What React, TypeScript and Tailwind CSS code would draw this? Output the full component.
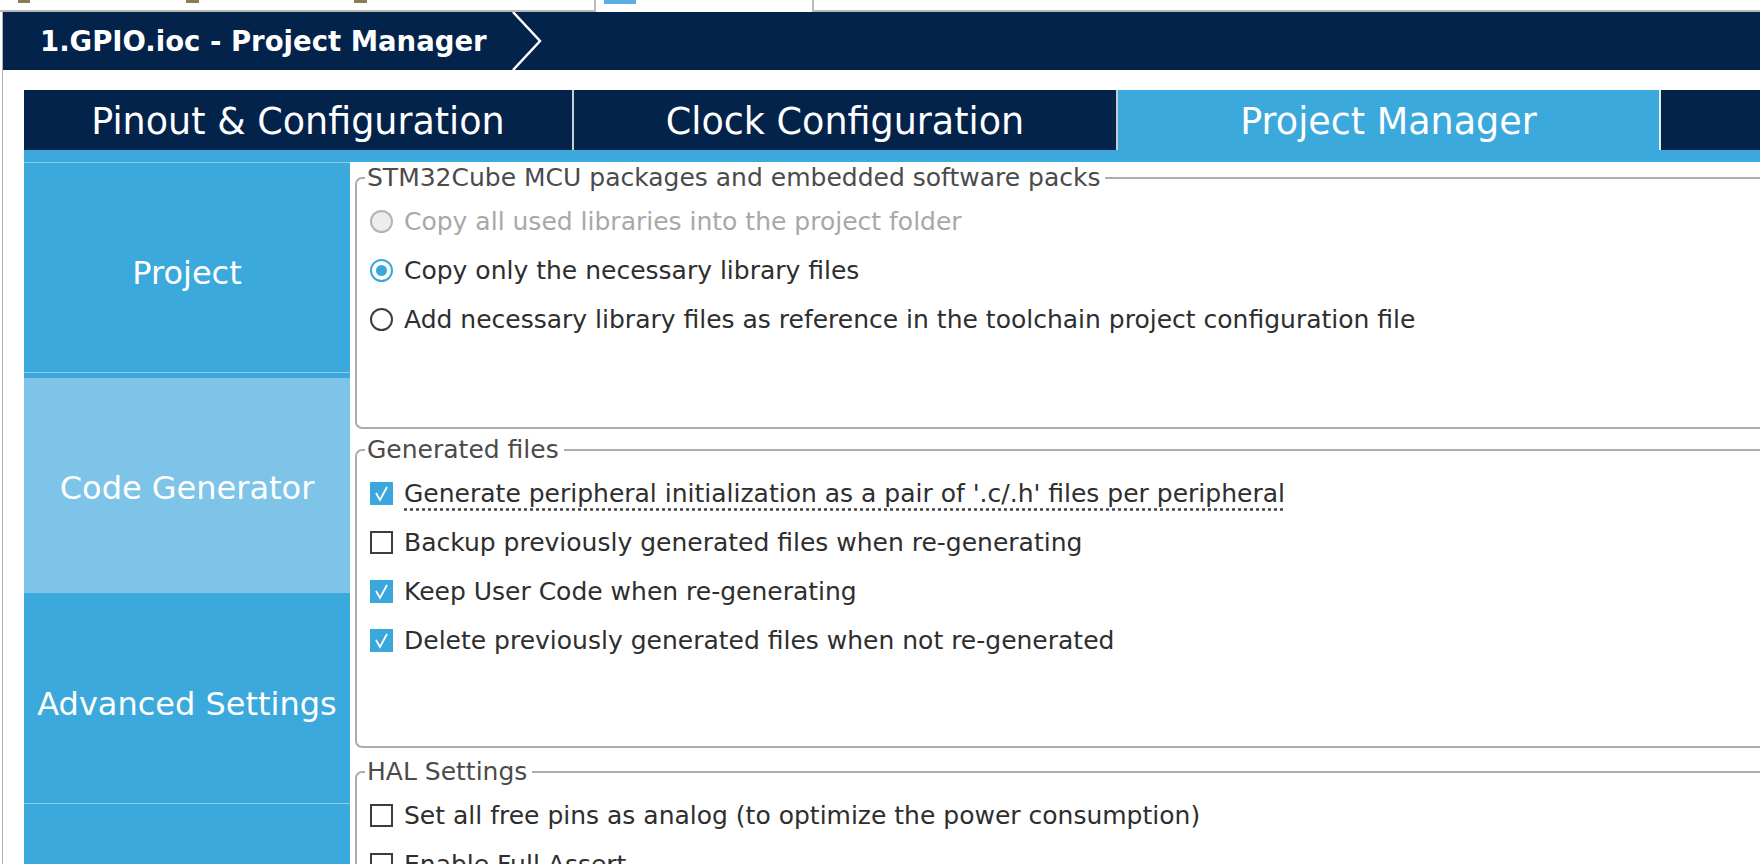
import React from "react";

const NAVY = "bg-[#03234b]";

function Radio({ state }: { state: "disabled" | "on" | "off" }) {
  if (state === "disabled")
    return <span className="w-[23px] h-[23px] shrink-0 rounded-full border-2 border-[#b3b3b5] bg-[#ededee]" />;
  if (state === "on")
    return (
      <span className="w-[23px] h-[23px] shrink-0 rounded-full border-2 border-[#3aa8dc] bg-white flex items-center justify-center">
        <span className="w-[11px] h-[11px] rounded-full bg-[#3aa8dc]" />
      </span>
    );
  return <span className="w-[23px] h-[23px] shrink-0 rounded-full border-2 border-[#3d3d3d] bg-white" />;
}

function Check({ on }: { on: boolean }) {
  if (!on) return <span className="w-[23px] h-[23px] shrink-0 border-2 border-[#3d3d3d] bg-white" />;
  return (
    <span className="w-[23px] h-[23px] shrink-0 bg-[#3aa8dc] flex items-center justify-center">
      <svg width="23" height="23" viewBox="0 0 23 23">
        <polyline points="6,11 10,18 17,5" fill="none" stroke="white" strokeWidth="1.8" />
      </svg>
    </span>
  );
}

function Group({ title, className, children }: { title: string; className: string; children: React.ReactNode }) {
  return (
    <div className={`relative shrink-0 border-2 border-r-0 rounded-l-[7px] border-[#a9acb1] ${className}`}>
      <span className="absolute -top-[16px] left-[8px] bg-white pl-[2px] pr-[5px] text-[25px] leading-[30px] text-[#4b4b4b]">
        {title}
      </span>
      <div className="pt-[18px] pl-[13px] flex flex-col">{children}</div>
    </div>
  );
}

function Row({ ctl, text, muted, dotted }: { ctl: React.ReactNode; text: string; muted?: boolean; dotted?: boolean }) {
  return (
    <div className="h-[49px] shrink-0 flex items-center gap-[11px]">
      {ctl}
      <span
        className={`text-[25px] leading-[30px] whitespace-nowrap ${muted ? "text-[#a8a8a8]" : "text-[#2e2e2e]"} ${
          dotted ? "underline decoration-dotted decoration-[#444] underline-offset-[7px]" : ""
        }`}
      >
        {text}
      </span>
    </div>
  );
}

export default function App() {
  return (
    <div className="w-[1760px] h-[864px] overflow-hidden bg-white flex flex-col font-['DejaVu_Sans',sans-serif]">
      {/* editor tabs, cut at top */}
      <div className="flex h-[12px] shrink-0">
        <div className="w-[596px] border-b-2 border-r-2 border-[#b9b9b9] flex items-start">
          <span className="ml-[18px] w-[12px] h-[3px] bg-[#8a7d52]" />
          <span className="ml-[156px] w-[13px] h-[3px] bg-[#8a7d52]" />
          <span className="ml-[155px] w-[13px] h-[3px] bg-[#8a7d52]" />
        </div>
        <div className="w-[218px] border-r-2 border-[#b9b9b9] flex items-start">
          <span className="ml-[8px] w-[32px] h-[4px] bg-[#5aaee0]" />
        </div>
        <div className="flex-1 border-b-2 border-[#b9b9b9]" />
      </div>

      <div className="flex-1 min-h-0 pl-[2px] flex flex-col">
        <div className="flex-1 min-h-0 border-l border-[#b3b3b3] flex flex-col">
          {/* breadcrumb banner */}
          <div className={`h-[58px] shrink-0 ${NAVY} flex items-center`}>
            <span className="pl-[37px] pt-[2px] text-white font-bold text-[27.5px] whitespace-nowrap">
              1.GPIO.ioc - Project Manager
            </span>
            <svg className="ml-[25px]" width="30" height="58" viewBox="0 0 30 58">
              <polyline points="1,0 28,29 1,58" fill="none" stroke="white" strokeWidth="2.5" />
            </svg>
          </div>

          {/* main tabs */}
          <div className="mt-[20px] ml-[21px] flex flex-col flex-1 min-h-0">
            <div className="h-[60px] flex shrink-0 text-white text-[36.5px]">
              <div className={`w-[548px] ${NAVY} flex items-center justify-center pt-[4px]`}>Pinout &amp; Configuration</div>
              <div className="w-[2px] bg-[#c7ced6]" />
              <div className={`w-[542px] ${NAVY} flex items-center justify-center pt-[4px]`}>Clock Configuration</div>
              <div className="w-[2px] bg-[#c7ced6]" />
              <div className="w-[541px] bg-[#3ba9dc] flex items-center justify-center pt-[4px]">Project Manager</div>
              <div className="w-[2px] bg-[#e3ebf1]" />
              <div className={`flex-1 ${NAVY}`} />
            </div>
            <div className="h-[12px] bg-[#3ba9dc] shrink-0" />

            <div className="flex flex-1 min-h-0">
              {/* side menu */}
              <div className="w-[326px] bg-[#3ba9dc] flex flex-col text-white text-[32px]">
                <div className="h-[1px] shrink-0 bg-[#8ccbeb]" />
                <div className="h-[215px] shrink-0 relative flex items-center justify-center pt-[5px]">
                  Project
                  <span className="absolute left-0 right-0 bottom-[5px] h-[1px] bg-[#8ccbeb]" />
                </div>
                <div className="h-[215px] shrink-0 bg-[#7dc4e8] flex items-center justify-center pt-[4px]">
                  Code Generator
                </div>
                <div className="h-[215px] shrink-0 relative flex items-center justify-center pt-[7px]">
                  Advanced Settings
                  <span className="absolute left-0 right-0 bottom-[4px] h-[1px] bg-[#8ccbeb]" />
                </div>
                <div className="flex-1" />
              </div>

              {/* content */}
              <div className="flex-1 min-w-0 bg-white pl-[5px] pt-[15px] flex flex-col">
                <Group title="STM32Cube MCU packages and embedded software packs" className="h-[252px]">
                  <Row ctl={<Radio state="disabled" />} text="Copy all used libraries into the project folder" muted />
                  <Row ctl={<Radio state="on" />} text="Copy only the necessary library files" />
                  <Row
                    ctl={<Radio state="off" />}
                    text="Add necessary library files as reference in the toolchain project configuration file"
                  />
                </Group>
                <Group title="Generated files" className="mt-[20px] h-[299px]">
                  <Row
                    ctl={<Check on />}
                    text="Generate peripheral initialization as a pair of '.c/.h' files per peripheral"
                    dotted
                  />
                  <Row ctl={<Check on={false} />} text="Backup previously generated files when re-generating" />
                  <Row ctl={<Check on />} text="Keep User Code when re-generating" />
                  <Row ctl={<Check on />} text="Delete previously generated files when not re-generated" />
                </Group>
                <Group title="HAL Settings" className="mt-[23px] h-[200px]">
                  <Row ctl={<Check on={false} />} text="Set all free pins as analog (to optimize the power consumption)" />
                  <Row ctl={<Check on={false} />} text="Enable Full Assert" />
                </Group>
              </div>
            </div>
          </div>
        </div>
      </div>
    </div>
  );
}
